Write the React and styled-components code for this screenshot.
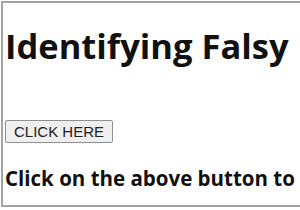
import React from 'react';
import styled, { createGlobalStyle } from 'styled-components';

const GlobalStyle = createGlobalStyle`
  html, body {
    margin: 0;
    padding: 0;
    background: #ffffff;
    overflow: hidden;
  }
`;

const App = () => {
  return (
    <>
      <GlobalStyle />
      <Frame>
        <Heading>Identifying Falsy</Heading>
        <ClickButton>CLICK HERE</ClickButton>
        <Message>Click on the above button to</Message>
      </Frame>
    </>
  );
};

export default App;

/** the screenshot frame: gray edges on top, left and bottom, cut off on the right */
const Frame = styled.div`
  box-sizing: border-box;
  width: 299px;
  height: 206px;
  margin-top: 1px;
  margin-left: 1px;
  border: 2px solid #a3a3a3;
  border-right: none;
  padding: 0 0 0 2px;
  overflow: hidden;
  background: #ffffff;
  font-family: "Open Sans", "Noto Sans", sans-serif;
  color: #111111;
`;

const Heading = styled.h1`
  margin: 21px 0 0 0;
  font-size: 34.5px;
  line-height: 44px;
  font-weight: 700;
  white-space: nowrap;
`;

const ClickButton = styled.button`
  display: block;
  margin-top: 52px;
  margin-left: 0;
  height: 23px;
  padding: 0 8px;
  background: #efefef;
  border: 1px solid #8f8f8f;
  border-radius: 2px;
  font-family: "Liberation Sans", Arial, sans-serif;
  font-size: 15px;
  color: #222222;
`;

const Message = styled.p`
  margin: 22px 0 0 0;
  font-size: 20.5px;
  line-height: 26px;
  font-weight: 700;
  white-space: nowrap;
`;
